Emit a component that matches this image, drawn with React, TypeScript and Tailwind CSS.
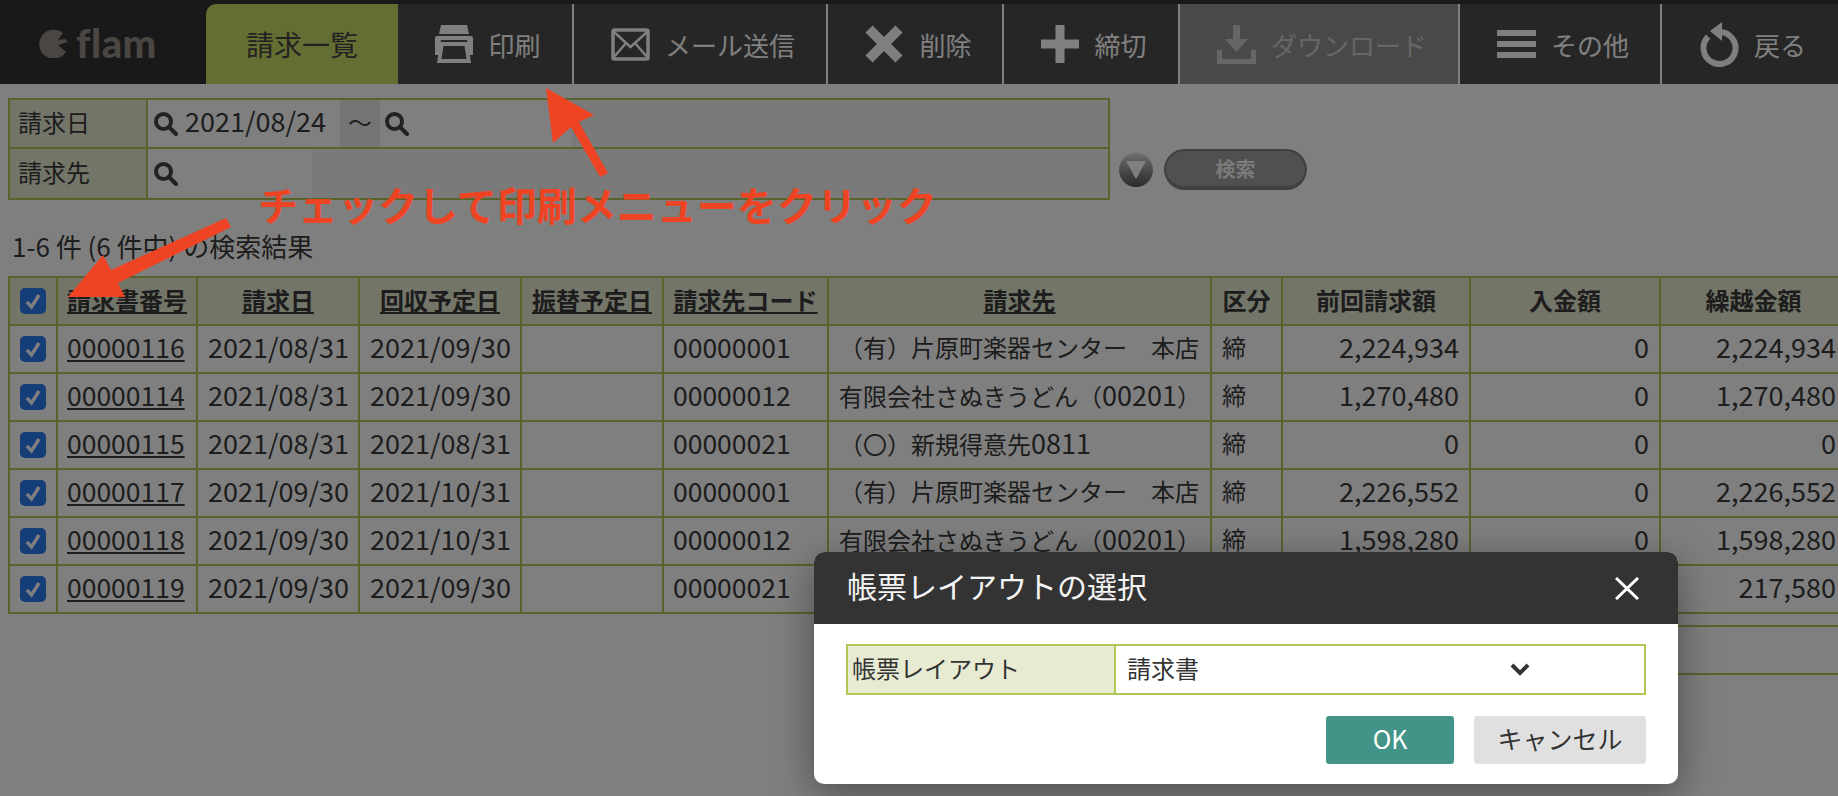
const rows = [
  ["00000116", "2021/08/31", "2021/09/30", "00000001", "（有）片原町楽器センター　本店", "2,224,934", "2,224,934"],
  ["00000114", "2021/08/31", "2021/09/30", "00000012", "有限会社さぬきうどん（00201）", "1,270,480", "1,270,480"],
  ["00000115", "2021/08/31", "2021/08/31", "00000021", "（〇）新規得意先0811", "0", "0"],
  ["00000117", "2021/09/30", "2021/10/31", "00000001", "（有）片原町楽器センター　本店", "2,226,552", "2,226,552"],
  ["00000118", "2021/09/30", "2021/10/31", "00000012", "有限会社さぬきうどん（00201）", "1,598,280", "1,598,280"],
  ["00000119", "2021/09/30", "2021/09/30", "00000021", "", "", "217,580"],
];

const td = "border-2 border-[#b0c858] px-[10px] pb-[4px] text-[27px]";
const code = "border-2 border-[#b0c858] px-[9px] pb-[4px] text-[26.5px]";

function Search() {
  return (
    <svg viewBox="0 0 25 25" className="w-[25px] h-[25px] shrink-0">
      <circle cx="10.5" cy="10.5" r="7.5" fill="none" stroke="#444" strokeWidth="4" />
      <path d="M16 16l7 7" stroke="#444" strokeWidth="4" strokeLinecap="round" />
    </svg>
  );
}

function Check() {
  return (
    <span className="flex w-[26px] h-[26px] items-center justify-center rounded-[5px] bg-[#2b7bf0]">
      <svg viewBox="0 0 26 26" className="w-[26px] h-[26px]">
        <path d="M7 14l4.5 5L19 7" fill="none" stroke="#fff" strokeWidth="3.4" />
      </svg>
    </span>
  );
}

const icons = {
  print: (
    <svg viewBox="0 0 38 38" className="w-[38px] h-[38px]" fill="#fff">
      <path d="M6 0h26l2 9H4z" />
      <path d="M2 11h34q2 0 2 2v17h-4l-2-15H6L4 30H0V13q0-2 2-2z" />
      <path fillRule="evenodd" d="M5 17h28l3 21H2zM8.500 21L6.500 34h25l-2-13z" />
    </svg>
  ),
  mail: (
    <svg viewBox="0 0 39 33" className="w-[39px] h-[33px]" fill="none" stroke="#fff" strokeWidth="3.500">
      <rect x="2" y="2" width="35" height="29" rx="1.500" />
      <path d="M3 4l16.500 15L36 4M3 29l12-14M36 29L24 15" strokeWidth="2.500" />
    </svg>
  ),
  del: (
    <svg viewBox="0 0 40 38" className="w-[40px] h-[38px]" stroke="#fff" strokeWidth="10">
      <path d="M5 4l30 30M35 4L5 34" />
    </svg>
  ),
  plus: (
    <svg viewBox="0 0 38 38" className="w-[38px] h-[38px]" stroke="#fff" strokeWidth="9">
      <path d="M19 0v38M0 19h38" />
    </svg>
  ),
  down: (
    <svg viewBox="0 0 39 39" className="w-[39px] h-[39px]" fill="#ccc">
      <path d="M16 0h7v14h8L19.500 27 8 14h8z" />
      <path d="M0 25h5v9h29v-9h5v14H0z" />
    </svg>
  ),
  menu: (
    <svg viewBox="0 0 39 28" className="w-[39px] h-[28px]" fill="#fff">
      <rect width="39" height="6" />
      <rect y="11" width="39" height="6" />
      <rect y="22" width="39" height="6" />
    </svg>
  ),
  back: (
    <svg viewBox="0 0 39 46" className="w-[39px] h-[46px]" fill="none">
      <path d="M8.200 15.700A16 16 0 1 0 19.500 11" stroke="#fff" strokeWidth="6" />
      <path d="M22 1v19L10 10z" fill="#fff" />
    </svg>
  ),
};

const tabs = [
  { w: "w-[176px]", icon: icons.print, label: "印刷" },
  { w: "w-[254px]", icon: icons.mail, label: "メール送信" },
  { w: "w-[176px]", icon: icons.del, label: "削除" },
  { w: "w-[176px]", icon: icons.plus, label: "締切" },
  { w: "w-[280px]", icon: icons.down, label: "ダウンロード", off: true },
  { w: "w-[202px]", icon: icons.menu, label: "その他" },
  { w: "w-[176px]", icon: icons.back, label: "戻る" },
];

// digits in the names run a little larger than the kanji
function Name({ text }: { text: string }) {
  return (
    <>
      {text.split(/(\d+)/).map((part, i) =>
        /\d/.test(part) ? <span key={i} className="text-[27px]">{part}</span> : <span key={i}>{part}</span>
      )}
    </>
  );
}

export default function App() {
  return (
    <div className="relative w-[1838px] h-[796px] overflow-hidden bg-white font-['Noto_Sans_CJK_JP',sans-serif] text-[#3a3a3a]">
      {/* top bar */}
      <header className="flex h-[84px] bg-[#333333] pt-[4px]">
        <div className="flex w-[206px] items-center gap-[8px] pb-[2px] pl-[39px]">
          <svg viewBox="0 0 29 29" className="w-[29px] h-[29px]">
            <path d="M24 4A14.500 14.500 0 1 0 27 23L19 16l10-3-3-3-7 1z" fill="#958c84" />
          </svg>
          <span className="font-['Lato',sans-serif] text-[40px] font-black leading-none tracking-[0.5px] text-[#958c84]">flam</span>
        </div>
        <div className="flex w-[192px] items-center justify-center rounded-tl-[10px] bg-[#c9dd65] text-[28px] text-[#444]">請求一覧</div>
        <nav className="flex flex-1 bg-[#4c4c4c]">
          {tabs.map((t) => (
            <div
              key={t.label}
              className={`${t.w} flex items-center justify-center gap-[15px] border-r-2 border-[#ffffff] pl-[6px] text-[26px] last:border-r-0 ${t.off ? "bg-[#959393] text-[#cccccc]" : "text-white"}`}
            >
              {t.icon}
              <span>{t.label}</span>
            </div>
          ))}
        </nav>
      </header>

      <main className="pt-[14px]">
        {/* search */}
        <div className="flex items-end">
          <div className="ml-[8px] w-[1102px] border-2 border-[#b0c858] text-[24px]">
            <div className="flex h-[49px] border-b-2 border-[#b0c858]">
              <div className="flex w-[138px] items-center border-r-2 border-[#b0c858] bg-[#e6ebd2] pb-[4px] pl-[8px]">請求日</div>
              <div className="flex w-[192px] items-center gap-[7px] pl-[5px] text-[27px]">
                <Search />
                <span className="pb-[4px]">2021/08/24</span>
              </div>
              <div className="flex w-[40px] items-center justify-center bg-[#ebebeb] pb-[4px]">～</div>
              <div className="flex w-[192px] items-center pl-[4px]"><Search /></div>
              <div className="flex-1 bg-[#f4f4f4]" />
            </div>
            <div className="flex h-[49px]">
              <div className="flex w-[138px] items-center border-r-2 border-[#b0c858] bg-[#e6ebd2] pb-[4px] pl-[8px]">請求先</div>
              <div className="flex w-[164px] items-center pl-[5px]"><Search /></div>
              <div className="flex-1 bg-[#f4f4f4]" />
            </div>
          </div>
          <div className="mb-[13px] ml-[9px] flex w-[34px] h-[34px] items-center justify-center rounded-full bg-gradient-to-b from-[#dddddd] to-[#555555]">
            <svg viewBox="0 0 20 18" className="w-[20px] h-[18px]"><path d="M0 0h20L10 18z" fill="#fff" /></svg>
          </div>
          <div className="mb-[10px] ml-[11px] flex w-[143px] h-[41px] items-center justify-center rounded-full border-2 border-b-[4px] border-[#808080] bg-[#a0a0a0] text-[20px] font-bold text-[#f4f4f4]">検索</div>
        </div>

        <p className="ml-[12px] mt-[32px] h-[28px] text-[26px] leading-[28px]">1-6 件 (6 件中) の検索結果</p>

        {/* result table */}
        <table className="ml-[8px] mt-[16px] w-[1838px] table-fixed border-collapse text-[24px]">
          <colgroup>
            <col className="w-[48px]" />
            <col className="w-[140px]" />
            <col className="w-[162px]" />
            <col className="w-[162px]" />
            <col className="w-[142px]" />
            <col className="w-[165px]" />
            <col className="w-[383px]" />
            <col className="w-[71px]" />
            <col className="w-[188px]" />
            <col className="w-[190px]" />
            <col className="w-[187px]" />
          </colgroup>
          <thead>
            <tr className="h-[48px] bg-[#e6ebd2] font-bold">
              <th className="border-2 border-[#b0c858]"><div className="flex justify-center"><Check /></div></th>
              {["請求書番号", "請求日", "回収予定日", "振替予定日", "請求先コード", "請求先"].map((h) => (
                <th key={h} className="whitespace-nowrap border-2 border-[#b0c858] pb-[2px] font-bold underline"><span className="-mx-2">{h}</span></th>
              ))}
              {["区分", "前回請求額", "入金額", "繰越金額"].map((h) => (
                <th key={h} className="whitespace-nowrap border-2 border-[#b0c858] pb-[2px] font-bold">{h}</th>
              ))}
            </tr>
          </thead>
          <tbody>
            {rows.map((r) => (
              <tr key={r[0]} className="h-[48px]">
                <td className="border-2 border-[#b0c858]"><div className="flex justify-center"><Check /></div></td>
                <td className={`${code} underline`}>{r[0]}</td>
                <td className={td}>{r[1]}</td>
                <td className={td}>{r[2]}</td>
                <td className={td} />
                <td className={code}>{r[3]}</td>
                <td className="whitespace-nowrap border-2 border-[#b0c858] px-[10px] pb-[4px] text-[24px]"><Name text={r[4]} /></td>
                <td className="border-2 border-[#b0c858] px-[10px] pb-[4px] text-[24px]">締</td>
                <td className={`${td} text-right`}>{r[5]}</td>
                <td className={`${td} text-right`}>0</td>
                <td className={`${td} text-right`}>{r[6]}</td>
              </tr>
            ))}
          </tbody>
        </table>

        {/* totals, only the rules show beside the dialog */}
        <div className="ml-[1300px] mt-[11px] h-[50px] border-y-2 border-[#b0c858]" />
      </main>

      {/* dim layer */}
      <div className="absolute inset-0 bg-black/50" />

      {/* annotation */}
      <svg viewBox="0 0 1838 796" className="pointer-events-none absolute inset-0 w-[1838px] h-[796px]" fill="#ef4423">
        <path d="M546 88L594 115L579 122L608 173L600 177L571 127L553 143z" />
        <path d="M68 297L103 255L111 270L226 218L231 227L118 283L125 297z" />
      </svg>
      <div className="absolute left-[258px] top-[176px] whitespace-nowrap text-[40px] font-bold leading-[56px] text-[#ef4423]">チェックして印刷メニューをクリック</div>

      {/* dialog */}
      <div className="absolute left-[814px] top-[552px] w-[864px] h-[232px] overflow-hidden rounded-[10px] bg-white shadow-[0_10px_40px_rgba(0,0,0,0.4)]">
        <div className="flex h-[72px] items-center justify-between bg-[#333333] pl-[33px] pr-[39px]">
          <span className="pb-[5px] text-[30px] text-[#f4f4f4]">帳票レイアウトの選択</span>
          <svg viewBox="0 0 24 23" className="w-[24px] h-[23px]" stroke="#fff" strokeWidth="3"><path d="M1 1l22 21M23 1L1 22" /></svg>
        </div>
        <div className="px-[32px] pt-[20px]">
          <div className="flex h-[51px] w-[800px] border-2 border-[#b0c858] text-[24px]">
            <div className="flex w-[268px] items-center border-r-2 border-[#b0c858] bg-[#e6ebd2] pb-[4px] pl-[4px] text-[#333]">帳票レイアウト</div>
            <div className="flex flex-1 items-center pl-[11px] text-[#333]">
              <span className="pb-[4px]">請求書</span>
              <svg viewBox="0 0 20 13" className="ml-[311px] w-[20px] h-[13px]" fill="none" stroke="#333" strokeWidth="4"><path d="M2 2l8 8 8-8" /></svg>
            </div>
          </div>
          <div className="mt-[21px] flex justify-end gap-[20px] text-[25px]">
            <div className="flex w-[128px] h-[48px] items-center justify-center rounded-[3px] bg-[#429488] pb-[2px] text-white">OK</div>
            <div className="flex w-[172px] h-[48px] items-center justify-center rounded-[3px] bg-[#e0e0e0] pb-[2px] text-[#333]">キャンセル</div>
          </div>
        </div>
      </div>
    </div>
  );
}
